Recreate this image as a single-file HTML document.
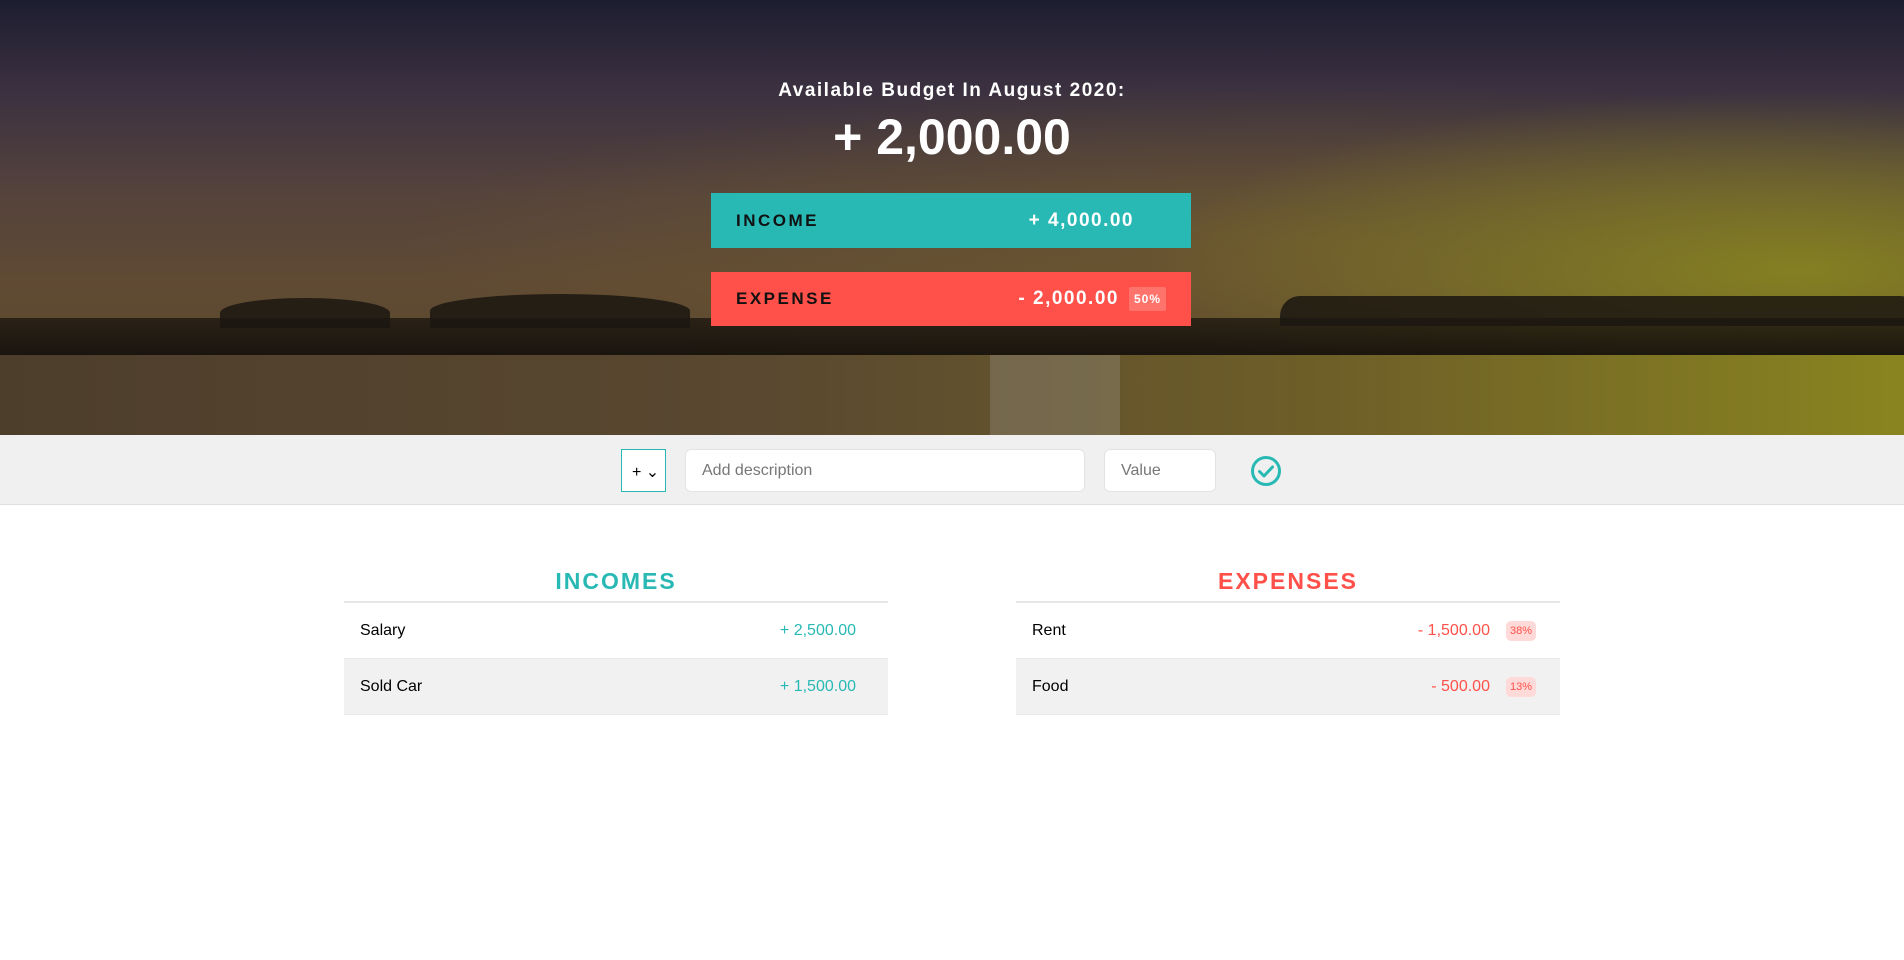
<!DOCTYPE html>
<html><head><meta charset="utf-8"><style>
*{box-sizing:border-box;margin:0;padding:0}
body{width:1904px;height:960px;background:#fff;font-family:"Liberation Sans",sans-serif;position:relative;overflow:hidden}
.top{position:absolute;left:0;top:0;width:1904px;height:435px;overflow:hidden;
background:
radial-gradient(ellipse 650px 180px at 1800px 270px,rgba(140,140,30,.8),rgba(140,140,30,0) 100%),
radial-gradient(ellipse 900px 160px at 1300px 240px,rgba(120,100,40,.5),rgba(120,100,40,0) 100%),
linear-gradient(180deg,#1d1d30 0%,#3a3040 20%,#55433c 45%,#604a34 65%,#5d4a30 75%,#3a2e22 100%);}
.band{position:absolute;left:0;top:318px;width:1904px;height:42px;background:linear-gradient(180deg,rgba(25,20,14,.75),rgba(18,14,10,.9));}
.hill{position:absolute;background:rgba(27,22,17,.85);border-radius:50% 50% 0 0}
.water{position:absolute;left:0;top:355px;width:1904px;height:80px;background:linear-gradient(90deg,#4d3e2c 0%,#5a4830 40%,#6e5f28 70%,#8a8420 100%)}
.t1{position:absolute;top:80px;width:100%;text-align:center;color:#fff;font-size:19px;font-weight:bold;letter-spacing:1.5px}
.t2{position:absolute;top:108px;width:100%;text-align:center;color:#fff;font-size:50px;font-weight:bold;letter-spacing:0}
.box{position:absolute;left:711px;width:480px;height:55px;display:flex;align-items:center;padding:0 25px;font-size:17px;letter-spacing:2.5px;font-weight:bold}
.box .l{color:#111;flex:1}
.box .v{color:#fff;font-size:19px;letter-spacing:1.5px}
.inc{top:193px;background:#28b9b5}
.inc .v{margin-right:32px}
.exp{top:272px;height:54px;background:#ff5049}
.pct{background:rgba(255,255,255,.2);color:#fff;font-size:12px;padding:5px 5px;margin-left:10px;letter-spacing:1px;border-radius:2px}
.bar{position:absolute;top:435px;left:0;width:1904px;height:70px;background:#f0f0f0;border-bottom:1px solid #e0e0e0}
.sel{position:absolute;left:621px;top:449px;width:45px;height:43px;border:1px solid #28b9b5;background:#fff;font-size:16px;padding:12px 0 0 10px;color:#000}
.in{position:absolute;top:449px;height:43px;background:#fff;border:1px solid #e3e3e3;border-radius:6px;color:#777;font-size:16px;padding:12px 0 0 16px}
.col{position:absolute;top:560px;width:544px}
.col h2{text-align:center;font-size:23px;font-weight:bold;letter-spacing:2px;height:43px;padding-top:8px;border-bottom:2px solid #e7e7e7}
.row{height:56px;display:flex;align-items:center;padding:0 32px 0 16px;border-bottom:1px solid #e7e7e7;font-size:16px;color:#000}
.row:nth-child(3){background:#f1f1f1}
.row .n{flex:1}
.b{background:#ffdad8;color:#ff5049;font-size:11px;padding:4px 4px;border-radius:5px;margin-left:16px;margin-right:-8px}
</style></head><body>
<div class="top">
<div class="band"></div>
<div class="hill" style="left:220px;top:298px;width:170px;height:30px"></div>
<div class="hill" style="left:430px;top:294px;width:260px;height:34px"></div>
<div class="hill" style="left:1280px;top:296px;width:640px;height:30px;border-radius:20px 20px 0 0"></div>
<div class="water"></div>
<div style="position:absolute;left:990px;top:355px;width:130px;height:80px;background:rgba(180,180,190,.22)"></div>
<div class="t1">Available Budget In August 2020:</div>
<div class="t2">+ 2,000.00</div>
<div class="box inc"><span class="l">INCOME</span><span class="v">+ 4,000.00</span></div>
<div class="box exp"><span class="l">EXPENSE</span><span class="v">- 2,000.00</span><span class="pct">50%</span></div>
</div>
<div class="bar"></div>
<div class="sel">+ &#8964;</div>
<div class="in" style="left:685px;width:400px">Add description</div>
<div class="in" style="left:1104px;width:112px">Value</div>
<svg style="position:absolute;left:1250px;top:455px" width="32" height="32" viewBox="0 0 32 32"><circle cx="16" cy="16" r="13.5" fill="none" stroke="#28b9b5" stroke-width="3"/><path d="M9.5 16.5l4.5 4.5 8.5-9" fill="none" stroke="#28b9b5" stroke-width="3" stroke-linecap="round" stroke-linejoin="round"/></svg>
<div class="col" style="left:344px"><h2 style="color:#28b9b5">INCOMES</h2>
<div class="row"><span class="n">Salary</span><span style="color:#28b9b5">+ 2,500.00</span></div>
<div class="row"><span class="n">Sold Car</span><span style="color:#28b9b5">+ 1,500.00</span></div></div>
<div class="col" style="left:1016px"><h2 style="color:#ff5049">EXPENSES</h2>
<div class="row"><span class="n">Rent</span><span style="color:#ff5049">- 1,500.00</span><span class="b">38%</span></div>
<div class="row"><span class="n">Food</span><span style="color:#ff5049">- 500.00</span><span class="b">13%</span></div></div>
</body></html>
